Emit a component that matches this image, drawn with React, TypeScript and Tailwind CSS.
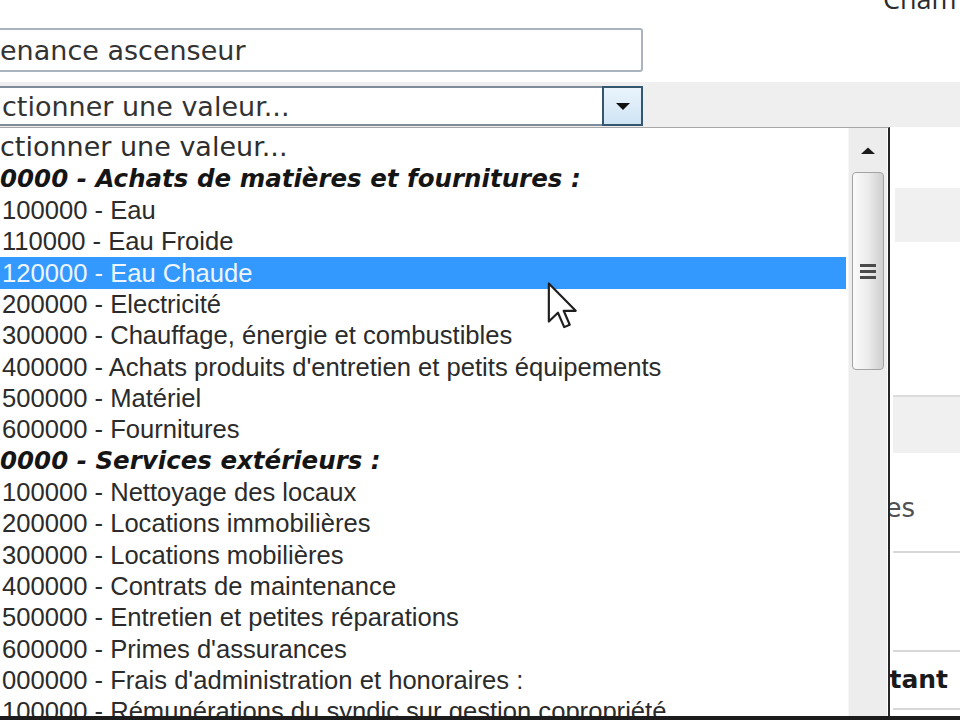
import React from 'react';

type Item = {
  text: string;
  kind: 'placeholder' | 'group' | 'account';
  selected?: boolean;
};

const items: Item[] = [
  { text: 'ctionner une valeur...', kind: 'placeholder' },
  { text: '0000 - Achats de matières et fournitures :', kind: 'group' },
  { text: '100000 - Eau', kind: 'account' },
  { text: '110000 - Eau Froide', kind: 'account' },
  { text: '120000 - Eau Chaude', kind: 'account', selected: true },
  { text: '200000 - Electricité', kind: 'account' },
  { text: '300000 - Chauffage, énergie et combustibles', kind: 'account' },
  { text: "400000 - Achats produits d'entretien et petits équipements", kind: 'account' },
  { text: '500000 - Matériel', kind: 'account' },
  { text: '600000 - Fournitures', kind: 'account' },
  { text: '0000 - Services extérieurs :', kind: 'group' },
  { text: '100000 - Nettoyage des locaux', kind: 'account' },
  { text: '200000 - Locations immobilières', kind: 'account' },
  { text: '300000 - Locations mobilières', kind: 'account' },
  { text: '400000 - Contrats de maintenance', kind: 'account' },
  { text: '500000 - Entretien et petites réparations', kind: 'account' },
  { text: "600000 - Primes d'assurances", kind: 'account' },
  { text: "000000 - Frais d'administration et honoraires :", kind: 'account' },
  { text: '100000 - Rémunérations du syndic sur gestion copropriété', kind: 'account' },
];

const verdana = "font-['DejaVu_Sans',_Verdana,_sans-serif]";
const arial = "font-['Liberation_Sans',_Arial,_sans-serif]";

function ListRow({ item }: { item: Item }) {
  if (item.kind === 'placeholder') {
    return (
      <div className={`h-[31.33px] flex items-center whitespace-nowrap text-[27px] text-[#2e2e2e] ${verdana}`}>
        {item.text}
      </div>
    );
  }
  if (item.kind === 'group') {
    return (
      <div className={`h-[31.33px] flex items-center whitespace-nowrap text-[24.5px] font-bold italic text-[#151515] ${verdana}`}>
        {item.text}
      </div>
    );
  }
  return (
    <div
      className={`h-[31.33px] flex items-center whitespace-nowrap pl-[2px] text-[25.6px] ${arial} ${
        item.selected ? 'bg-[#3399ff] text-[#eef5ff]' : 'text-[#2b2b2b]'
      }`}
    >
      {item.text}
    </div>
  );
}

function Scrollbar() {
  return (
    <div className="w-[39px] bg-[#ededed] border-l border-[#f6f6f6] flex flex-col">
      <div className="h-[44px] flex items-center justify-center">
        <svg width="16" height="9" viewBox="0 0 16 9">
          <path d="M1 8 L8 1.5 L15 8 Z" fill="#1c1c1c" />
        </svg>
      </div>
      <div className="mx-[3px] h-[198px] rounded-[4px] border border-[#a3a3a3] bg-gradient-to-r from-[#fafafa] via-[#ececec] to-[#cfcfcf] flex items-center justify-center">
        <div className="flex flex-col gap-[3px]">
          <div className="w-[16px] h-[3px] bg-[#4a4a4a]" />
          <div className="w-[16px] h-[3px] bg-[#4a4a4a]" />
          <div className="w-[16px] h-[3px] bg-[#4a4a4a]" />
        </div>
      </div>
    </div>
  );
}

function Cursor() {
  return (
    <svg width="32" height="48" viewBox="0 0 13 20" className="absolute left-[547px] top-[282px]">
      <path
        d="M0.6 0.6 L0.6 16.5 L4.4 12.8 L7 18.8 L9.3 17.8 L6.8 12 L11.8 12 Z"
        fill="#ffffff"
        stroke="#1e1e1e"
        strokeWidth="0.9"
        strokeLinejoin="round"
      />
    </svg>
  );
}

export default function App() {
  return (
    <div className="relative w-[960px] h-[720px] overflow-hidden bg-white">
      {/* Header strip, label cut by the top edge as in the capture */}
      <div className="h-[28px] overflow-hidden pl-[883px]">
        <div className="-mt-[21px] whitespace-nowrap text-[27px] text-[#2c2c2c] font-['Open_Sans',_sans-serif]">
          Cham
        </div>
      </div>

      {/* Text input */}
      <div className="h-[54px]">
        <div className={`-ml-[4px] w-[647px] h-[44px] border-2 border-[#aab4be] rounded-[3px] bg-white flex items-center pl-[2px] pt-[3px] whitespace-nowrap overflow-hidden text-[27px] text-[#333] ${verdana}`}>
          enance ascenseur
        </div>
      </div>

      {/* Select row */}
      <div className="h-[45px] bg-[#efefef] pt-[4px]">
        <div className="-ml-[4px] w-[647px] h-[40px] border-2 border-r-0 border-[#7f8c99] bg-white flex items-stretch">
          <div className={`flex-1 flex items-center pl-[4px] pt-[2px] whitespace-nowrap overflow-hidden text-[27px] text-[#333] ${verdana}`}>
            ctionner une valeur...
          </div>
          <div className="w-[41px] -my-[2px] border-2 border-[#34566e] bg-gradient-to-b from-[#eaf4fc] to-[#cfe4f4] flex items-center justify-center">
            <svg width="16" height="9" viewBox="0 0 16 9">
              <path d="M1 1 L15 1 L8 8 Z" fill="#111" />
            </svg>
          </div>
        </div>
      </div>

      {/* Form content behind the open list */}
      <div className="ml-[890px] flex flex-col">
        <div className="h-[61px]" />
        <div className="h-[54px] ml-[5px] bg-[#f0f0f0]" />
        <div className="h-[153px]" />
        <div className="h-[58px] ml-[3px] border-t-2 border-[#dcdcdc] bg-[#f0f0f0]" />
        <div className="h-[98px] flex items-center justify-end pr-[45px] pt-[12px] whitespace-nowrap">
          <span className={`text-[26px] text-[#505050] ${verdana}`}>Charges</span>
        </div>
        <div className="h-[99px] ml-[3px] border-t-2 border-[#d8d8d8]" />
        <div className="h-[60px] ml-[3px] border-t-2 border-b-2 border-[#d8d8d8] flex items-center justify-end pr-[12px] whitespace-nowrap">
          <span className={`text-[25px] font-bold text-[#1a1a1a] ${verdana}`}>Montant</span>
        </div>
      </div>

      {/* Open drop-down list */}
      <div className="absolute left-0 top-[127px] bottom-0 w-[890px] bg-white border-t border-[#a7a7a7] border-r-2 border-r-[#262626] flex">
        <div className="w-[848px] pt-[4px] pr-[2px] overflow-hidden">
          {items.map((item, i) => (
            <ListRow key={i} item={item} />
          ))}
        </div>
        <Scrollbar />
      </div>

      <Cursor />

      {/* Frame edge */}
      <div className="absolute left-0 right-0 bottom-0 h-[4px] bg-[#1c1c1c]" />
    </div>
  );
}
